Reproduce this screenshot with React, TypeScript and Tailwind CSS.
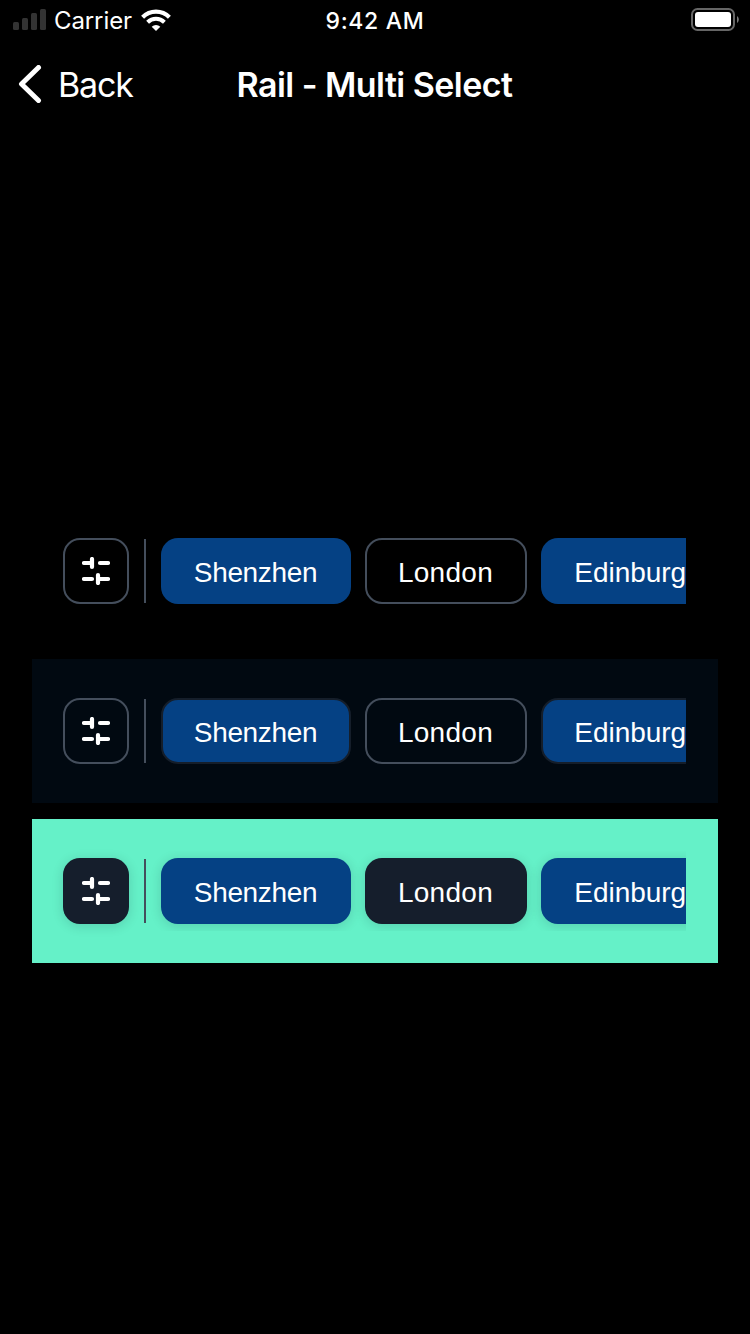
type Variant = "plain" | "surface" | "vibrant";

const sectionStyles: Record<Variant, string> = {
  plain: "",
  surface: "bg-[#010911]",
  vibrant: "bg-[#65f1c8]",
};

const outlined = "border-2 border-[#444e5c]";
const raised = "bg-[#151e2c] shadow-[0_2px_12px_rgba(20,30,44,0.16)]";

const idleStyles: Record<Variant, string> = {
  plain: outlined,
  surface: outlined,
  vibrant: raised,
};

const selectedStyles: Record<Variant, string> = {
  plain: "bg-[#054184]",
  surface: "border-2 border-[#151e2a] bg-[#054184]",
  vibrant: "bg-[#054184] shadow-[0_2px_12px_rgba(20,30,44,0.16)]",
};

const chips = [
  { label: "Shenzhen", selected: true, width: "w-[190px]", text: "pr-px tracking-[-0.35px]" },
  { label: "London", selected: false, width: "w-[162px]", text: "pr-px tracking-[0.3px]" },
  { label: "Edinburgh", selected: true, width: "w-[194px]", text: "tracking-[-0.02px]" },
];

function FilterIcon() {
  return (
    <svg width="28" height="28" viewBox="0 0 28 28" fill="none" stroke="white" strokeWidth="4.2" strokeLinecap="round">
      <path d="M2 6H10M10 2V10M18 6H26M2 22H10M16 18V26M16 22H26" />
    </svg>
  );
}

function Rail({ variant }: { variant: Variant }) {
  return (
    <section className={`flex h-36 items-center pr-8 pl-[31px] ${sectionStyles[variant]}`}>
      <button
        aria-label="Filters"
        className={`flex size-[66px] shrink-0 items-center justify-center rounded-[17px] ${idleStyles[variant]}`}
      >
        <FilterIcon />
      </button>
      <div className="ml-[15px] h-16 w-0.5 shrink-0 bg-[#444e5c]" />
      <div className="flex h-20 min-w-0 flex-1 items-center gap-3.5 overflow-hidden pl-[15px]">
        {chips.map((chip) => (
          <button
            key={chip.label}
            className={`flex h-[66px] shrink-0 items-center justify-center rounded-[17px] font-['Liberation_Sans',sans-serif] text-[28px] leading-8 text-white ${chip.width} ${
              chip.selected ? selectedStyles[variant] : idleStyles[variant]
            }`}
          >
            <span className={`pt-[3px] ${chip.text}`}>{chip.label}</span>
          </button>
        ))}
      </div>
    </section>
  );
}

function StatusBar() {
  return (
    <div className="grid h-10 grid-cols-3 items-center pr-[11px] pl-[13px]">
      <div className="flex items-center">
        <svg className="mb-0.5" width="33" height="21" viewBox="0 0 33 21" fill="#333333">
          <rect x="0" y="13" width="6" height="8" rx="1.5" />
          <rect x="9" y="9" width="6" height="12" rx="1.5" />
          <rect x="18" y="4" width="6" height="17" rx="1.5" />
          <rect x="27" y="0" width="6" height="21" rx="1.5" />
        </svg>
        <span className="ml-2 pt-0.5 text-[24px] leading-8 tracking-[-0.1px]">Carrier</span>
        <svg className="ml-[9px]" width="30" height="22" viewBox="0 0 30 22" fill="none" stroke="white">
          <path d="M1.6 8.2A19 19 0 0 1 28.4 8.2" strokeWidth="4.2" />
          <path d="M6.6 13.3A12 12 0 0 1 23.4 13.3" strokeWidth="4" />
          <path d="M15 22L10.7 17.7A6.2 6.2 0 0 1 19.3 17.7Z" fill="white" stroke="none" />
        </svg>
      </div>
      <div className="pt-0.5 pr-0.5 text-center text-[23px] leading-8 font-medium tracking-[0.7px]">9:42 AM</div>
      <div className="flex justify-end pb-0.5">
        <svg width="48" height="23" viewBox="0 0 48 23">
          <rect x="1" y="1" width="42" height="21" rx="5.5" fill="none" stroke="#666666" strokeWidth="2" />
          <rect x="4" y="4" width="36" height="15" rx="3" fill="white" />
          <path d="M46 8C48.4 9.4 48.4 13.6 46 15Z" fill="#777777" />
        </svg>
      </div>
    </div>
  );
}

function NavBar() {
  return (
    <header className="grid h-[88px] grid-cols-[1fr_auto_1fr] items-center px-[18px]">
      <button className="flex items-center">
        <svg width="24" height="38" viewBox="0 0 24 38" fill="none" stroke="white" strokeWidth="5" strokeLinecap="round" strokeLinejoin="round">
          <path d="M20.5 2.5L3.5 19L20.5 35.5" />
        </svg>
        <span className="ml-4 pt-px text-[34px] leading-10 tracking-[-1.2px]">Back</span>
      </button>
      <h1 className="pt-px pr-px text-[34px] leading-10 font-semibold tracking-[-0.55px]">Rail - Multi Select</h1>
    </header>
  );
}

export default function App() {
  return (
    <div className="flex h-[1334px] w-[750px] flex-col overflow-hidden bg-black font-['Inter',sans-serif] text-white">
      <StatusBar />
      <NavBar />
      <main className="flex flex-col gap-4 px-8 pt-[371px]">
        <Rail variant="plain" />
        <Rail variant="surface" />
        <Rail variant="vibrant" />
      </main>
    </div>
  );
}
